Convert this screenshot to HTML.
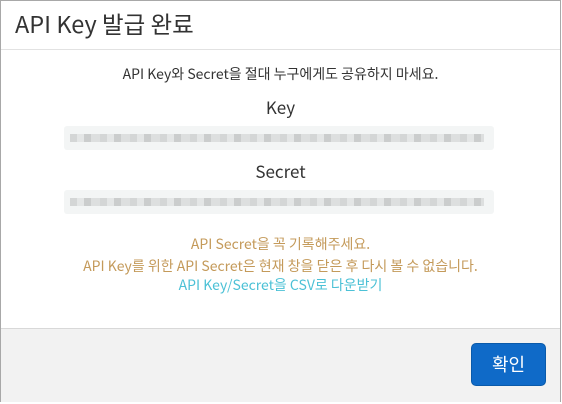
<!DOCTYPE html><html><head><meta charset="utf-8"><style>
*{margin:0;padding:0;box-sizing:border-box}
body{width:562px;height:404px;background:#fff;font-family:"Noto Sans CJK KR",sans-serif;position:relative;overflow:hidden}
.m{position:absolute;left:0;top:0;width:561px;height:402px;border:1px solid #a8a8a8;background:#fff}
.h{position:absolute;left:0;top:0;width:100%;height:49px;border-bottom:1px solid #e2e2e2}
.h div{position:absolute;left:14px;top:5px;font-size:23.5px;line-height:34px;color:#333}
.t{position:absolute;left:0;width:100%;text-align:center;line-height:18px}
.blur{position:absolute;left:63px;width:430px;height:24px;background:#f3f5f5;border-radius:3px;overflow:hidden}
.blur i{position:absolute;left:6px;right:10px;top:8px;height:8px;background:repeating-linear-gradient(90deg,#d4d6d6 0 7px,#e4e6e6 7px 14px,#cbcdcd 14px 21px,#dddfdf 21px 30px)}
.f{position:absolute;left:0;width:100%;height:74px;background:#f2f2f2;border-top:1px solid #d8d8d8}
.btn{position:absolute;left:471px;top:343px;width:75px;height:43px;background:#0f6ac8;border:1px solid #0a5aaa;border-radius:5px;color:#fff;font-size:18px;text-align:center;line-height:40px}
</style></head><body>
<div class="m">
<div class="h"><div>API Key 발급 완료</div></div>
<div class="t" style="top:64px;font-size:14px;color:#333">API Key와 Secret을 절대 누구에게도 공유하지 마세요.</div>
<div class="t" style="top:95px;font-size:17px;line-height:22px;color:#333">Key</div>
<div class="blur" style="top:125px"><i></i></div>
<div class="t" style="top:159px;font-size:17px;line-height:22px;color:#333">Secret</div>
<div class="blur" style="top:189px"><i></i></div>
<div class="t" style="top:234px;font-size:14px;color:#c49a5a">API Secret을 꼭 기록해주세요.</div>
<div class="t" style="top:256px;font-size:14px;color:#c49a5a">API Key를 위한 API Secret은 현재 창을 닫은 후 다시 볼 수 없습니다.</div>
<div class="t" style="top:275px;font-size:14px;color:#4cc1d6">API Key/Secret을 CSV로 다운받기</div>
<div class="f" style="top:327px"></div>
</div>
<div class="btn">확인</div>
</body></html>
